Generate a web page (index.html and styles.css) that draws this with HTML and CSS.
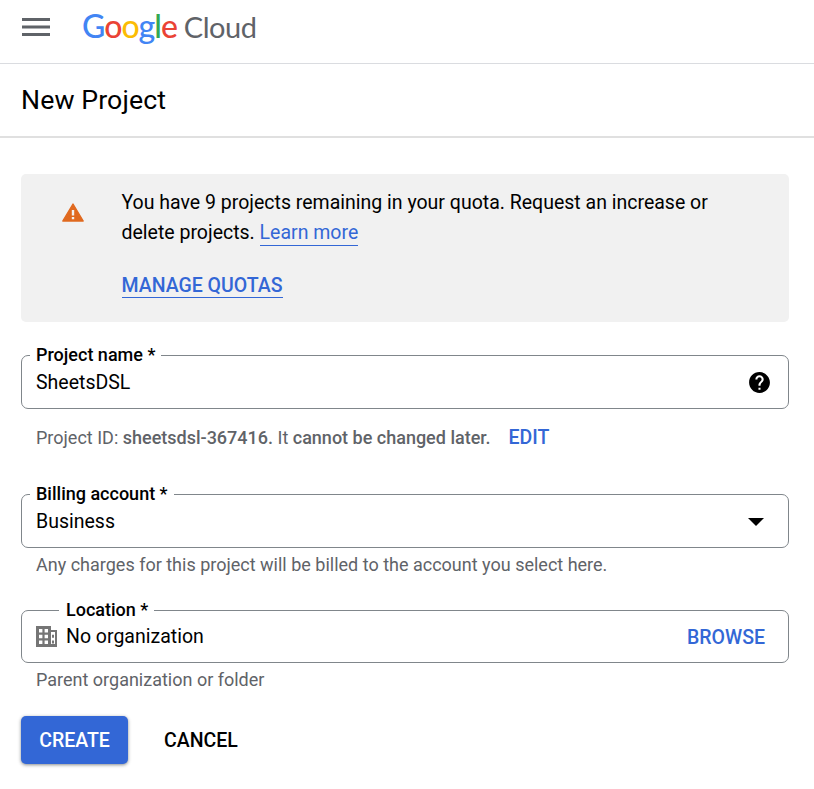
FILE: index.html
```html
<!DOCTYPE html>
<html lang="en">
<head>
<meta charset="utf-8">
<title>New Project</title>
<link rel="stylesheet" href="styles.css">
</head>
<body>
<header class="topbar">
  <svg class="menu" viewBox="0 0 28 20" width="28" height="20"><path d="M0 1h28v3H0zM0 8.5h28v3H0zM0 16h28v3H0z"/></svg>
  <div class="logo"><span class="google"><span class="g-blue">G</span><span class="g-red">o</span><span class="g-yellow">o</span><span class="g-blue">g</span><span class="g-green">l</span><span class="g-red">e</span></span><span class="cloud">Cloud</span></div>
</header>
<div class="titlebar"><h1>New Project</h1></div>
<main class="content">
  <section class="alert">
    <div class="alert-icon"><svg viewBox="0 0 22 19" width="22" height="19"><path class="warn" d="M11 1 L21.2 18 H0.8 Z"/><path class="warn-mark" d="M9.8 7h2.4v5.6H9.8zM9.8 14h2.4v2.3H9.8z"/></svg></div>
    <div class="alert-body">
      <p>You have 9 projects remaining in your quota. Request an increase or delete projects. <a class="link" href="#">Learn more</a></p>
      <a class="quota" href="#">MANAGE QUOTAS</a>
    </div>
  </section>

  <fieldset class="field first">
    <legend>Project name *</legend>
    <span class="value">SheetsDSL</span>
    <svg class="field-icon" viewBox="0 0 24 24" width="25" height="25"><path d="M12 2C6.48 2 2 6.48 2 12s4.48 10 10 10 10-4.48 10-10S17.52 2 12 2zm1 17h-2v-2h2v2zm2.07-7.75-.9.92C13.45 12.9 13 13.5 13 15h-2v-.5c0-1.1.45-2.1 1.17-2.83l1.24-1.26c.37-.36.59-.86.59-1.41 0-1.1-.9-2-2-2s-2 .9-2 2H8c0-2.21 1.79-4 4-4s4 1.79 4 4c0 .88-.36 1.68-.93 2.25z"/></svg>
  </fieldset>
  <p class="hint id-hint">Project ID: <b>sheetsdsl-367416.</b> It <b>cannot be changed later.</b><a class="edit" href="#">EDIT</a></p>

  <fieldset class="field billing">
    <legend>Billing account *</legend>
    <span class="value">Business</span>
    <svg class="arrow" viewBox="0 0 16 8" width="16" height="8"><path d="M0 0h16L8 8z"/></svg>
  </fieldset>
  <p class="hint">Any charges for this project will be billed to the account you select here.</p>

  <fieldset class="field location">
    <legend class="legend-wide">Location *</legend>
    <svg class="building" viewBox="0 0 21 21" width="21" height="21"><path fill-rule="evenodd" d="M0 0h15v4h6v17H0zM3 3v3.4h3.4V3zM8.6 3v3.4H12V3zM3 8.8v3.4h3.4V8.8zM8.6 8.8v3.4H12V8.8zM3 14.6V18h3.4v-3.4zM8.6 14.6V18H12v-3.4zM15 6v12h4V6zM16 8.8v3h2v-3zM16 14.6v3h2v-3z"/></svg>
    <span class="value">No organization</span>
    <a class="browse" href="#">BROWSE</a>
  </fieldset>
  <p class="hint">Parent organization or folder</p>

  <div class="actions">
    <button class="btn primary" type="button">CREATE</button>
    <button class="btn plain" type="button">CANCEL</button>
  </div>
</main>
</body>
</html>
```
FILE: styles.css
```css
* { box-sizing: border-box; }
html, body { margin: 0; padding: 0; }
body {
  width: 814px;
  height: 789px;
  overflow: hidden;
  background: #fff;
  color: #000;
  font-family: Roboto, "Liberation Sans", sans-serif;
  font-size: 19.5px;
}
a { text-decoration: none; }

.topbar {
  height: 64px;
  border-bottom: 1px solid #dadce0;
  display: flex;
  align-items: flex-start;
  padding: 17px 0 0 22px;
}
.menu { fill: #5f6368; flex: none; }
.logo {
  margin: -9px 0 0 32px;
  font-family: Lato, sans-serif;
  line-height: 36px;
  white-space: nowrap;
  display: flex;
  align-items: baseline;
}
.google { font-size: 32px; letter-spacing: -1px; font-weight: 500; }
.g-blue { color: #4285f4; }
.g-red { color: #ea4335; }
.g-yellow { color: #fbbc04; }
.g-green { color: #34a853; }
.cloud { color: #5f6368; margin-left: 7px; font-size: 29px; letter-spacing: -0.5px; }

.titlebar {
  height: 74px;
  border-bottom: 2px solid #e0e0e0;
  padding: 0 21px;
  display: flex;
  align-items: center;
}
h1 { margin: 0; font-size: 26.7px; font-weight: 400; letter-spacing: 0.1px; }

.content { padding: 36px 25px 0 21px; }

.alert {
  height: 148px;
  background: #f1f1f1;
  border-radius: 5px;
  display: flex;
  padding: 14px 60px 0 0;
}
.alert-icon { width: 100.5px; flex: none; padding: 15px 0 0 41px; }
.warn { fill: #e0691f; stroke: #e0691f; stroke-width: 1.4; stroke-linejoin: round; }
.warn-mark { fill: #f1f1f1; }
.alert-body p { margin: 0; line-height: 30px; font-size: 19.5px; }
.link { color: #3367d6; border-bottom: 1px solid #3367d6; padding-bottom: 1px; }
.quota {
  display: inline-block;
  margin-top: 26px;
  color: #3367d6;
  font-weight: 500;
  font-size: 19.5px;
  line-height: 23px;
  border-bottom: 1px solid #3367d6;
}

.field {
  margin: 0;
  min-width: 0;
  height: 63px;
  padding: 0 22px 6px 14px;
  border: 1px solid #80868b;
  border-radius: 7px;
  display: flex;
  align-items: center;
  position: relative;
}
.field legend {
  margin: 0 0 -1px -6px;
  padding: 0 6px;
  font-size: 18px;
  line-height: 18px;
  font-weight: 500;
}
.field .legend-wide { margin-left: 23px; padding: 0 6px 0 7px; }
.first { margin-top: 24px; }
.billing { margin-top: 35px; }
.location { margin-top: 24px; height: 62px; padding-bottom: 6px; }
.value { font-size: 19.5px; line-height: 24px; }
.field-icon { margin-left: auto; margin-right: -6px; flex: none; }
.arrow { margin-left: auto; margin-right: 2px; flex: none; }
.building { flex: none; fill: #757575; margin: 0 9px 1px 0; }
.browse { margin-left: auto; margin-right: 1px; color: #3367d6; font-weight: 500; font-size: 19.5px; }

.hint {
  margin: 5px 0 0 15px;
  color: #5f6368;
  font-size: 18px;
  line-height: 24px;
}
.hint b { font-weight: 500; }
.id-hint { margin-top: 17px; }
.edit { margin-left: 18px; color: #3367d6; font-weight: 500; font-size: 19.5px; }

.actions { display: flex; margin-top: 24px; gap: 18px; }
.btn {
  height: 48px;
  border: 0;
  border-radius: 5px;
  font-family: inherit;
  font-size: 19.5px;
  font-weight: 500;
  padding: 0;
  background: transparent;
  color: #000;
}
.primary {
  width: 107px;
  background: #3367d6;
  color: #fff;
  box-shadow: 0 1px 3px rgba(60,64,67,.45), 0 1px 4px rgba(60,64,67,.2);
}
.plain { width: 110px; }
```
